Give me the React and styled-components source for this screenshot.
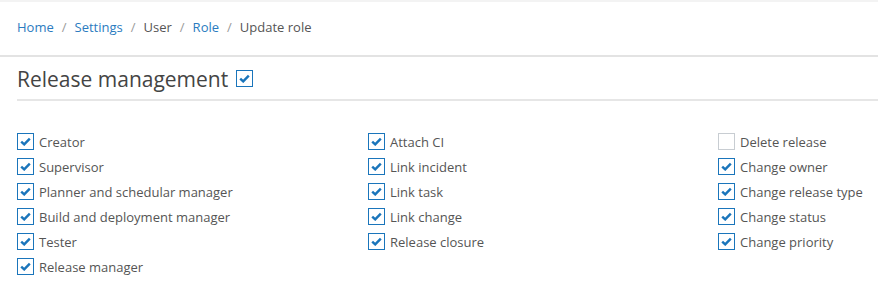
import React from "react"
import styled, { createGlobalStyle } from "styled-components"

const GlobalStyle = createGlobalStyle`
  body {
    margin: 0;
    background: #ffffff;
    font-family: "Open Sans", "Noto Sans", sans-serif;
  }
`

const columns = [
  [
    { label: "Creator", checked: true },
    { label: "Supervisor", checked: true },
    { label: "Planner and schedular manager", checked: true },
    { label: "Build and deployment manager", checked: true },
    { label: "Tester", checked: true },
    { label: "Release manager", checked: true },
  ],
  [
    { label: "Attach CI", checked: true },
    { label: "Link incident", checked: true },
    { label: "Link task", checked: true },
    { label: "Link change", checked: true },
    { label: "Release closure", checked: true },
  ],
  [
    { label: "Delete release", checked: false },
    { label: "Change owner", checked: true },
    { label: "Change release type", checked: true },
    { label: "Change status", checked: true },
    { label: "Change priority", checked: true },
  ],
]

const crumbs = [
  { label: "Home", link: true },
  { label: "Settings", link: true },
  { label: "User", link: false },
  { label: "Role", link: true },
  { label: "Update role", link: false },
]

const Checkbox = ({ checked }) => (
  <Box $checked={checked}>
    {checked && (
      <svg width="11" height="9" viewBox="0 0 11 9">
        <path d="M1.2 4.6 L4.2 7.4 L9.8 1.6" fill="none" stroke="#1a75bb" strokeWidth="2.4" />
      </svg>
    )}
  </Box>
)

const App = () => (
  <Page>
    <GlobalStyle />
    <TopStrip />
    <Breadcrumb>
      {crumbs.map((c, i) => (
        <React.Fragment key={c.label}>
          {i > 0 && <Sep>/</Sep>}
          <Crumb $link={c.link}>{c.label}</Crumb>
        </React.Fragment>
      ))}
    </Breadcrumb>
    <Section>
      <Heading>
        Release management
        <Checkbox checked />
      </Heading>
      <Grid>
        {columns.map((col, i) => (
          <Column key={i}>
            {col.map((item) => (
              <Option key={item.label}>
                <Checkbox checked={item.checked} />
                <span>{item.label}</span>
              </Option>
            ))}
          </Column>
        ))}
      </Grid>
    </Section>
  </Page>
)

export default App

const Page = styled.div`
  width: 878px;
  height: 293px;
  overflow: hidden;
  background: #ffffff;
`

const TopStrip = styled.div`
  height: 2px;
  background: #f3f3f3;
`

const Breadcrumb = styled.nav`
  display: flex;
  align-items: center;
  gap: 8px;
  height: 49px;
  padding: 0 17px 4px;
  border-bottom: 2px solid #e3e3e3;
  font-size: 13px;
`

const Crumb = styled.span`
  color: ${(p) => (p.$link ? "#2b7bc0" : "#555555")};
`

const Sep = styled.span`
  color: #9a9a9a;
`

const Section = styled.div`
  padding: 0 0 0 17px;
`

const Heading = styled.h2`
  display: flex;
  align-items: center;
  gap: 8px;
  margin: 0;
  height: 44px;
  padding-top: 1px;
  box-sizing: border-box;
  font-size: 21px;
  font-weight: 400;
  color: #444444;
  border-bottom: 2px solid #e6e6e6;
`

const Grid = styled.div`
  display: grid;
  grid-template-columns: 351px 350px 1fr;
  padding-top: 28px;
`

const Column = styled.div`
  display: flex;
  flex-direction: column;
`

const Option = styled.label`
  display: flex;
  align-items: center;
  gap: 5px;
  height: 25px;
  font-size: 13px;
  color: #555555;
`

const Box = styled.span`
  box-sizing: border-box;
  display: inline-flex;
  align-items: center;
  justify-content: center;
  width: 17px;
  height: 17px;
  border: 1.5px solid ${(p) => (p.$checked ? "#1a75bb" : "#c8cdd2")};
  background: #ffffff;
  flex-shrink: 0;
`
